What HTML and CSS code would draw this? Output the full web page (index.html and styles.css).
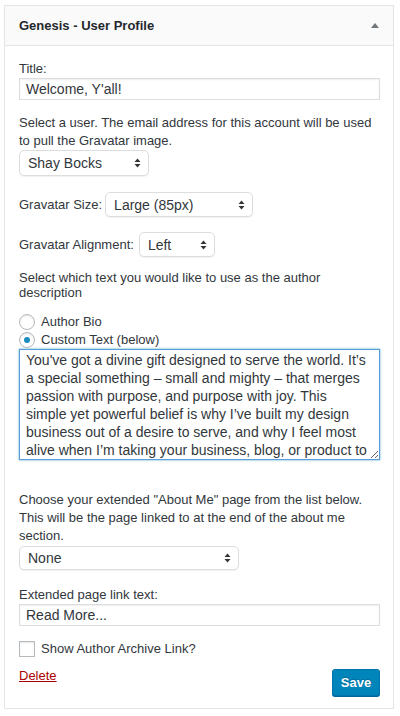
FILE: index.html
```html
<!DOCTYPE html>
<html>
<head>
  <meta charset="UTF-8">
  <title>Genesis - User Profile</title>
  <link rel="stylesheet" href="styles.css">
</head>
<body>

<div class="widget">
  <div class="widget-top">
    <h3>Genesis - User Profile</h3>
    <span class="toggle"></span>
  </div>

  <div class="widget-inside">
    <label class="lbl" for="title">Title:</label>
    <input class="wide" id="title" type="text" value="Welcome, Y'all!">

    <p class="txt user-note">Select a user. The email address for this account will be used to pull the Gravatar image.</p>
    <div class="sel sel-user">
      <select><option>Shay Bocks</option></select>
      <svg class="arrows" width="7" height="10" viewBox="0 0 7 10"><path d="M0.5 4 L3.5 0.5 L6.5 4 Z M0.5 6 L3.5 9.5 L6.5 6 Z"/></svg>
    </div>

    <div class="row row-size">
      <label>Gravatar Size:</label>
      <div class="sel sel-size">
        <select><option>Large (85px)</option></select>
        <svg class="arrows" width="7" height="10" viewBox="0 0 7 10"><path d="M0.5 4 L3.5 0.5 L6.5 4 Z M0.5 6 L3.5 9.5 L6.5 6 Z"/></svg>
      </div>
    </div>

    <div class="row row-align">
      <label>Gravatar Alignment:</label>
      <div class="sel sel-align">
        <select><option>Left</option></select>
        <svg class="arrows" width="7" height="10" viewBox="0 0 7 10"><path d="M0.5 4 L3.5 0.5 L6.5 4 Z M0.5 6 L3.5 9.5 L6.5 6 Z"/></svg>
      </div>
    </div>

    <p class="txt desc-note">Select which text you would like to use as the author description</p>
    <div class="radios">
      <label class="opt"><span class="radio"></span>Author Bio</label>
      <label class="opt"><span class="radio on"></span>Custom Text (below)</label>
    </div>
    <textarea class="bio">You've got a divine gift designed to serve the world. It’s
a special something – small and mighty – that merges
passion with purpose, and purpose with joy. This
simple yet powerful belief is why I’ve built my design
business out of a desire to serve, and why I feel most
alive when I’m taking your business, blog, or product to
the next level.</textarea>

    <p class="txt about-note">Choose your extended "About Me" page from the list below. This will be the page linked to at the end of the about me section.</p>
    <div class="sel sel-page">
      <select><option>None</option></select>
      <svg class="arrows" width="7" height="10" viewBox="0 0 7 10"><path d="M0.5 4 L3.5 0.5 L6.5 4 Z M0.5 6 L3.5 9.5 L6.5 6 Z"/></svg>
    </div>

    <label class="lbl link-lbl" for="more">Extended page link text:</label>
    <input class="wide" id="more" type="text" value="Read More...">

    <label class="opt check-row"><span class="check"></span>Show Author Archive Link?</label>

    <div class="actions">
      <a class="delete" href="#">Delete</a>
      <button class="save">Save</button>
    </div>
  </div>
</div>

</body>
</html>
```

FILE: styles.css
```css
body { margin:0; font: 13px/18px "Liberation Sans", Arial, sans-serif; color:#32373c; background:#fff; }

.widget {
  margin: 5px 6px 0 4px;
  border: 1px solid #e5e5e5;
  box-shadow: 0 1px 1px rgba(0,0,0,0.04);
}
.widget-top {
  height: 39px;
  background: #fafafa;
  border-bottom: 1px solid #e5e5e5;
  display: flex;
  align-items: center;
  justify-content: space-between;
  padding: 0 14px;
}
.widget-top h3 { margin:0; font-size:13px; font-weight:700; color:#23282d; }
.toggle {
  width: 0; height: 0;
  border-left: 4px solid transparent;
  border-right: 4px solid transparent;
  border-bottom: 5px solid #72777c;
}

.widget-inside { padding: 14px 13px 12px 14px; }

.lbl { display:block; }
.txt { margin:0; }

input.wide {
  display: block;
  box-sizing: border-box;
  width: 100%;
  height: 22px;
  margin: 0;
  padding: 0 6px;
  border: 1px solid #ddd;
  box-shadow: inset 0 1px 2px rgba(0,0,0,0.07);
  font: 14px "Liberation Sans", Arial, sans-serif;
  color: #32373c;
}

.user-note { margin-top:14px; }

.sel { position: relative; }
.sel select {
  -webkit-appearance: none;
  appearance: none;
  display: block;
  box-sizing: border-box;
  width: 100%;
  height: 100%;
  margin: 0;
  padding: 0 8px;
  border: 1px solid #ddd;
  border-radius: 5px;
  background: #fff;
  box-shadow: 0 1px 1px rgba(0,0,0,0.06);
  font: 14px "Liberation Sans", Arial, sans-serif;
  color: #32373c;
}
.sel .arrows { position:absolute; right:8px; top:50%; margin-top:-5px; fill:#333; }

.sel-user { width:130px; height:26px; }

.row { display:flex; align-items:center; gap:5px; }
.row-size { margin-top:16px; gap:3px; }
.row-align { margin-top:15px; }
.sel-size { width:148px; height:25px; }
.sel-align { width:76px; height:25px; }

.desc-note { margin-top:13px; line-height:15px; }

.radios { margin-top:13px; }
.opt { display:flex; align-items:center; height:18px; }
.radio {
  box-sizing: border-box;
  width: 16px; height: 16px;
  margin-right: 6px;
  border: 1px solid #b4b9be;
  border-radius: 50%;
  background: #fff;
  box-shadow: inset 0 1px 2px rgba(0,0,0,0.1);
  display: flex;
  align-items: center;
  justify-content: center;
}
.radio.on::before {
  content: "";
  width: 6px; height: 6px;
  border-radius: 50%;
  background: #1e8cbe;
}

textarea.bio {
  display: block;
  box-sizing: border-box;
  width: 100%;
  height: 111px;
  margin: 0;
  padding: 1px 6px;
  border: 1px solid #5b9dd9;
  box-shadow: 0 0 2px rgba(30,140,190,0.8);
  font: 14px/18px "Liberation Sans", Arial, sans-serif;
  color: #32373c;
  white-space: pre;
  overflow: hidden;
  outline: none;
}

.about-note { margin-top:31px; }
.sel-page { width:220px; height:24px; margin-top:1px; }

.link-lbl { margin-top:16px; }

.check-row { margin-top:14px; }
.check {
  box-sizing: border-box;
  width: 16px; height: 16px;
  margin-right: 6px;
  border: 1px solid #b4b9be;
  background: #fff;
  box-shadow: inset 0 1px 2px rgba(0,0,0,0.1);
}

.actions {
  margin-top: 11px;
  display: flex;
  justify-content: space-between;
  align-items: flex-start;
}
.delete { color:#a00; text-decoration:underline; margin-top:-2px; }
.save {
  box-sizing: border-box;
  height: 27px;
  width: 48px;
  padding: 0;
  border: 1px solid #0073aa;
  border-radius: 3px;
  background: #0085ba;
  box-shadow: 0 1px 0 #006799;
  color: #fff;
  font: 700 13px "Liberation Sans", Arial, sans-serif;
  text-shadow: 0 -1px 1px #006799;
}
```
